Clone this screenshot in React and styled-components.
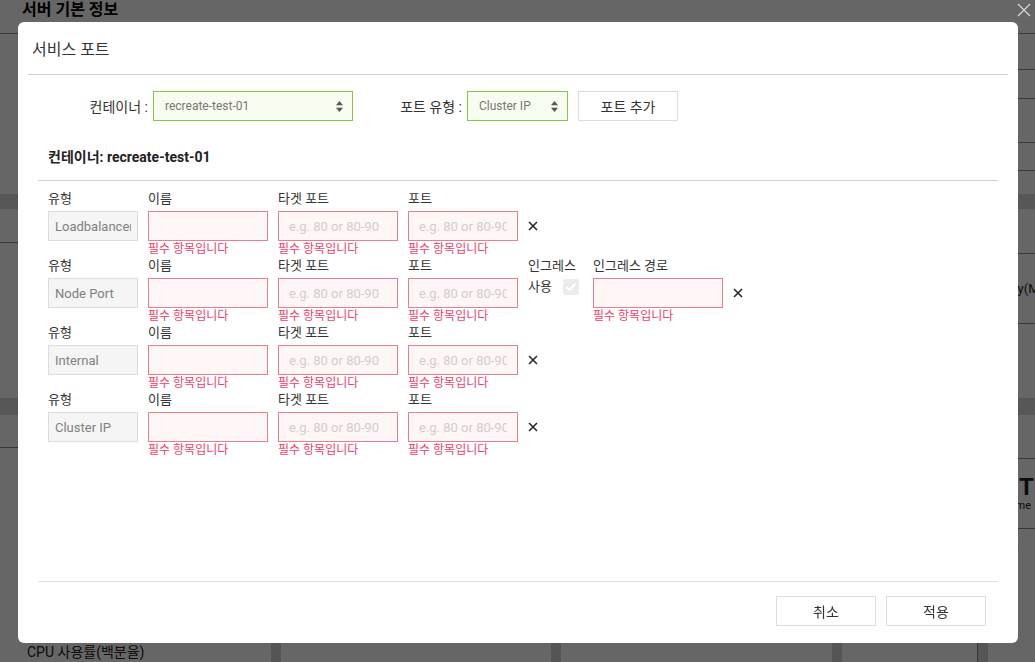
import React from "react";
import styled, { createGlobalStyle } from "styled-components";

const Global = createGlobalStyle`
  html, body { margin: 0; padding: 0; }
  body { font-family: Roboto, "Noto Sans CJK KR", sans-serif; background: #fff; overflow: hidden; }
  * { box-sizing: border-box; }
`;

/* ---------- background page ---------- */
const Page = styled.div`
  width: 1035px;
  height: 662px;
  background: #fff;
  display: flex;
  flex-direction: column;
  color: #111;
`;
const PageHeader = styled.div`
  height: 34px;
  border-bottom: 1px solid #8a8a8a;
  padding-left: 22px;
  font-size: 16px;
  font-weight: 700;
  line-height: 20px;
  color: #000;
`;
const Area = styled.div`
  display: flex;
  height: ${(p) => p.$h}px;
`;
const LeftPane = styled.div`
  flex: 1;
  display: flex;
  flex-direction: column;
`;
const RightRail = styled.div`
  width: 59px;
  display: flex;
  flex-direction: column;
  overflow: hidden;
`;
const Cell = styled.div`
  height: ${(p) => p.$h}px;
  flex: ${(p) => (p.$h ? "none" : "1")};
  border-bottom: ${(p) => (p.$line ? "1px solid #8a8a8a" : "none")};
  display: flex;
  align-items: center;
  white-space: nowrap;
  font-size: 13px;
  color: #222;
`;
const StatCell = styled(Cell)`
  flex-direction: column;
  align-items: flex-start;
  justify-content: center;
`;
const StatValue = styled.span`
  font-size: 24px;
  font-weight: 700;
  line-height: 24px;
  margin-left: 43px;
`;
const StatName = styled.span`
  font-size: 11px;
  margin-left: 20px;
`;
const Band = styled.div`
  height: ${(p) => p.$h}px;
  background: #d9d9d9;
`;
const CardsRow = styled.div`
  flex: 1;
  display: grid;
  grid-template-columns: 271px 270px 271px 136px 1fr;
  column-gap: 10px;
  background: #d4d4d4;
`;
const Card = styled.div`
  background: #fff;
  padding: 12px 0 0 27px;
  font-size: 14px;
  color: #222;
  white-space: nowrap;
  border-right: ${(p) => (p.$line ? "1px solid #8a8a8a" : "none")};
`;

/* ---------- overlay + modal ---------- */
const Overlay = styled.div`
  position: fixed;
  inset: 0;
  background: rgba(0, 0, 0, 0.6);
`;
const CloseX = styled.svg`
  position: fixed;
  right: 4px;
  top: 3px;
`;
const Modal = styled.div`
  position: fixed;
  left: 18px;
  top: 22px;
  width: 1000px;
  height: 621px;
  background: #fff;
  border-radius: 6px;
  display: flex;
  flex-direction: column;
  color: #333;
  font-family: Roboto, "Noto Sans CJK KR", sans-serif;
`;
const ModalHeader = styled.div`
  margin: 0 10px;
  padding: 0 4px;
  height: 53px;
  border-bottom: 1px solid #cfcfcf;
  display: flex;
  align-items: center;
  font-size: 16px;
  color: #333;
`;
const ModalBody = styled.div`
  flex: 1;
  padding: 0 20px;
  display: flex;
  flex-direction: column;
`;
const ControlRow = styled.div`
  margin-top: 16px;
  display: flex;
  align-items: center;
  height: 30px;
`;
const ControlLabel = styled.label`
  width: ${(p) => p.$w}px;
  margin-right: 5px;
  text-align: right;
  font-size: 14px;
  color: #333;
  white-space: nowrap;
`;
const SelectBox = styled.div`
  width: ${(p) => p.$w}px;
  height: 30px;
  border: 1px solid #8cc63f;
  background: #f7fdf0;
  padding: 0 9px 0 11px;
  display: flex;
  align-items: center;
  justify-content: space-between;
  font-size: 12px;
  color: #777;
`;
const Button = styled.button`
  width: 100px;
  height: 30px;
  margin-left: ${(p) => p.$ml || 0}px;
  border: 1px solid #ddd;
  background: #fff;
  font-family: inherit;
  font-size: 14px;
  color: #333;
  padding: 0;
  cursor: pointer;
`;
const SectionTitle = styled.div`
  margin-top: 19px;
  height: 41px;
  padding: 0 10px 8px;
  display: flex;
  align-items: center;
  border-bottom: 1px solid #cfcfcf;
  font-size: 14px;
  font-weight: 700;
  color: #222;
`;
const Rows = styled.div`
  padding: 9px 10px 0;
  display: flex;
  flex-direction: column;
`;
const PortRow = styled.div`
  display: flex;
  gap: 10px;
  align-items: flex-start;
`;
const Field = styled.div`
  width: ${(p) => p.$w}px;
  display: flex;
  flex-direction: column;
`;
const FieldLabel = styled.div`
  height: 21px;
  display: flex;
  align-items: flex-end;
  padding-bottom: 3px;
  font-size: 13px;
  line-height: 18px;
  color: #333;
  white-space: nowrap;
`;
const Input = styled.input`
  width: 100%;
  height: 30px;
  margin: 0;
  border: 1px solid ${(p) => (p.$error ? "#e6808f" : "#ddd")};
  background: ${(p) => (p.$error ? "#fff6f6" : "#f5f5f5")};
  padding: 0 ${(p) => (p.$error ? 10 : 6)}px;
  font-family: inherit;
  font-size: 13px;
  color: #808080;
  outline: none;
  border-radius: 0;
  &::placeholder { color: #cfcfcf; }
`;
const ErrorText = styled.div`
  height: 16px;
  padding-top: 1px;
  font-size: 12px;
  line-height: 14px;
  color: #f0406a;
  white-space: nowrap;
`;
const RemoveCell = styled.div`
  margin-top: 21px;
  height: 30px;
  display: flex;
  align-items: center;
  color: #222;
`;
const UseRow = styled.div`
  display: flex;
  align-items: flex-start;
  gap: 11px;
  font-size: 13px;
  line-height: 18px;
  color: #333;
`;
const CheckBox = styled.span`
  margin-top: 1px;
  width: 16px;
  height: 16px;
  border-radius: 2px;
  background: #ececec;
  display: flex;
  align-items: center;
  justify-content: center;
`;
const ModalFooter = styled.div`
  margin: 0 20px;
  border-top: 1px solid #e0e0e0;
  padding: 14px 12px 17px;
  display: flex;
  justify-content: flex-end;
  gap: 10px;
`;

const Arrows = () => (
  <svg width="7" height="11" viewBox="0 0 7 11">
    <path d="M3.5 0 L7 4.2 L0 4.2 Z" fill="#555" />
    <path d="M3.5 11 L7 6.8 L0 6.8 Z" fill="#555" />
  </svg>
);

const XIcon = () => (
  <svg width="10" height="10" viewBox="0 0 10 10">
    <path d="M1 1 L9 9 M9 1 L1 9" stroke="#222" strokeWidth="1.5" />
  </svg>
);

const REQ = "필수 항목입니다";
const PH = "e.g. 80 or 80-90";

const rows = [
  { type: "Loadbalancer", ingress: false },
  { type: "Node Port", ingress: true },
  { type: "Internal", ingress: false },
  { type: "Cluster IP", ingress: false },
];

const PortLine = ({ type, ingress }) => (
  <PortRow>
    <Field $w={90}>
      <FieldLabel>유형</FieldLabel>
      <Input value={type} readOnly />
    </Field>
    <Field $w={120}>
      <FieldLabel>이름</FieldLabel>
      <Input $error />
      <ErrorText>{REQ}</ErrorText>
    </Field>
    <Field $w={120}>
      <FieldLabel>타겟 포트</FieldLabel>
      <Input $error placeholder={PH} />
      <ErrorText>{REQ}</ErrorText>
    </Field>
    <Field $w={110}>
      <FieldLabel>포트</FieldLabel>
      <Input $error placeholder={PH} />
      <ErrorText>{REQ}</ErrorText>
    </Field>
    {ingress && (
      <>
        <Field $w={55}>
          <FieldLabel>인그레스</FieldLabel>
          <UseRow>
            사용
            <CheckBox>
              <svg width="12" height="10" viewBox="0 0 12 10">
                <path d="M1.5 5 L4.5 8 L10.5 1.5" stroke="#fff" strokeWidth="2" fill="none" />
              </svg>
            </CheckBox>
          </UseRow>
        </Field>
        <Field $w={130}>
          <FieldLabel>인그레스 경로</FieldLabel>
          <Input $error />
          <ErrorText>{REQ}</ErrorText>
        </Field>
      </>
    )}
    <RemoveCell>
      <XIcon />
    </RemoveCell>
  </PortRow>
);

export default function App() {
  return (
    <>
      <Global />
      <Page>
        <PageHeader>서버 기본 정보</PageHeader>
        <Area $h={160}>
          <LeftPane />
          <RightRail>
            <Cell $h={36} $line />
            <Cell $h={29} $line />
            <Cell $h={44} $line />
            <Cell $h={28} $line />
            <Cell />
          </RightRail>
        </Area>
        <Band $h={15} />
        <Area $h={189}>
          <LeftPane>
            <Cell $h={34} $line />
            <Cell />
          </LeftPane>
          <RightRail>
            <Cell $h={45} $line />
            <Cell $h={70} $line>Memory(MB)</Cell>
            <Cell />
          </RightRail>
        </Area>
        <Band $h={17} />
        <Area $h={214}>
          <LeftPane>
            <Cell $h={33} $line />
            <Cell />
          </LeftPane>
          <RightRail>
            <Cell $h={44} $line />
            <StatCell $h={70} $line>
              <StatValue>T</StatValue>
              <StatName>Uptime</StatName>
            </StatCell>
            <Cell $h={30}>Kb/min</Cell>
            <Cell />
          </RightRail>
        </Area>
        <CardsRow>
          <Card>CPU 사용률(백분율)</Card>
          <Card />
          <Card />
          <Card $line />
          <Card />
        </CardsRow>
      </Page>
      <Overlay />
      <CloseX width="14" height="14" viewBox="0 0 14 14">
        <path d="M1 1 L13 13 M13 1 L1 13" stroke="#d8d8d8" strokeWidth="1.2" />
      </CloseX>
      <Modal>
        <ModalHeader>서비스 포트</ModalHeader>
        <ModalBody>
          <ControlRow>
            <ControlLabel $w={110}>컨테이너 :</ControlLabel>
            <SelectBox $w={200}>
              recreate-test-01
              <Arrows />
            </SelectBox>
            <ControlLabel $w={109}>포트 유형 :</ControlLabel>
            <SelectBox $w={101}>
              Cluster IP
              <Arrows />
            </SelectBox>
            <Button $ml={10}>포트 추가</Button>
          </ControlRow>
          <SectionTitle>컨테이너: recreate-test-01</SectionTitle>
          <Rows>
            {rows.map((r, i) => (
              <PortLine key={i} {...r} />
            ))}
          </Rows>
        </ModalBody>
        <ModalFooter>
          <Button>취소</Button>
          <Button>적용</Button>
        </ModalFooter>
      </Modal>
    </>
  );
}
